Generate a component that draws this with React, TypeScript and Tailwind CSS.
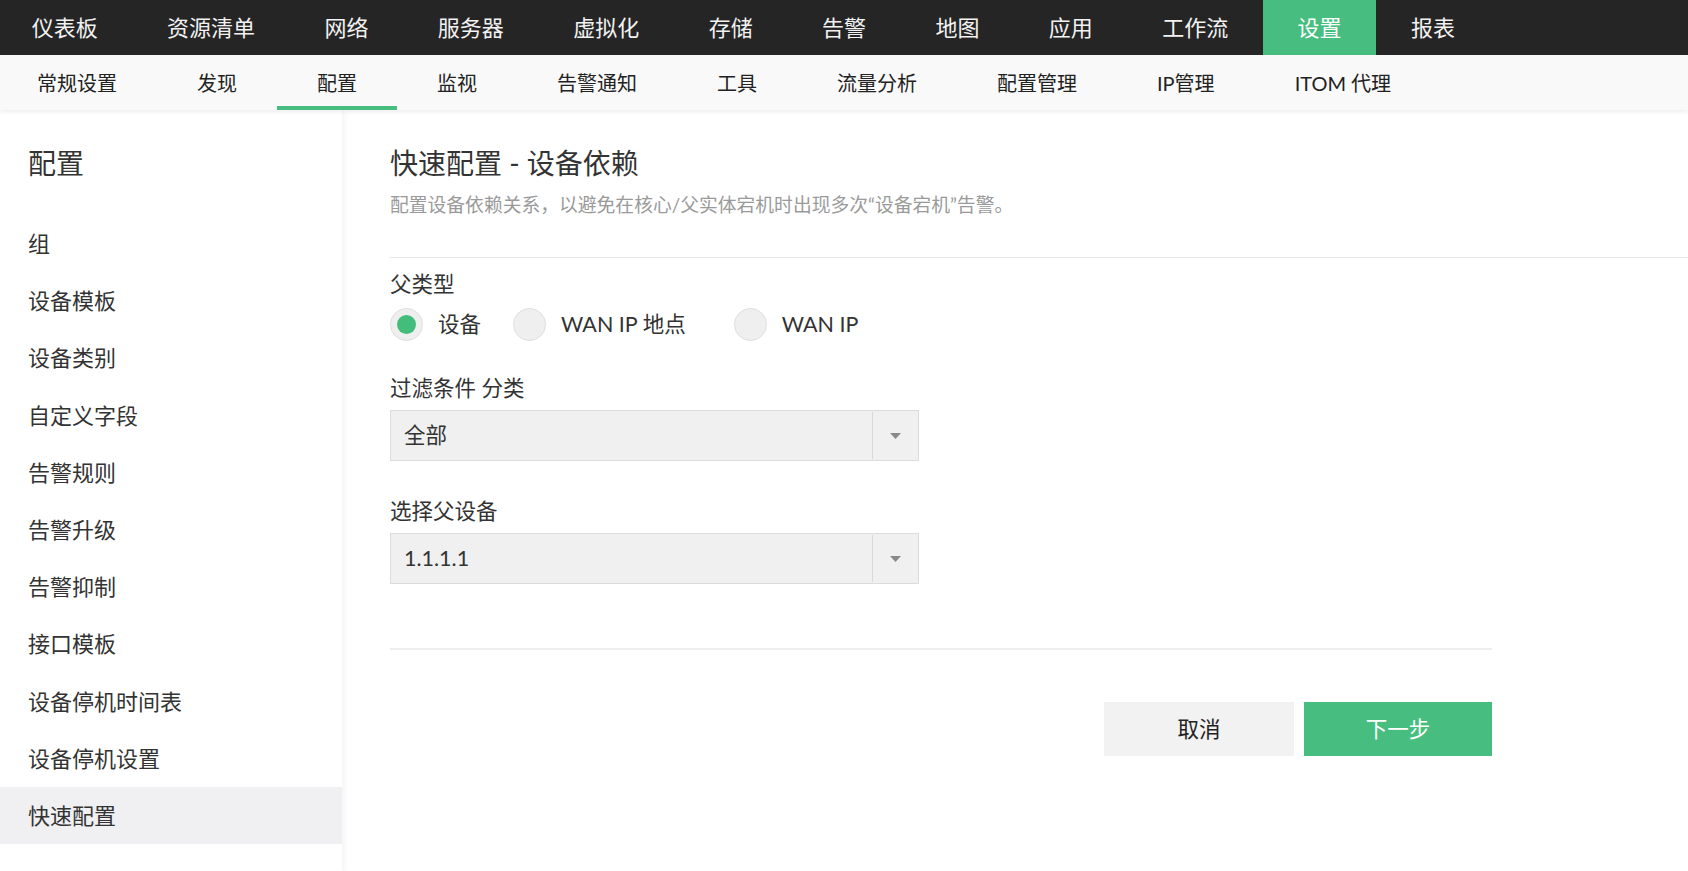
import React from "react";

const topItems = ["仪表板", "资源清单", "网络", "服务器", "虚拟化", "存储", "告警", "地图", "应用", "工作流", "设置", "报表"];
const subItems = ["常规设置", "发现", "配置", "监视", "告警通知", "工具", "流量分析", "配置管理", "IP管理", "ITOM 代理"];
const sideItems = ["组", "设备模板", "设备类别", "自定义字段", "告警规则", "告警升级", "告警抑制", "接口模板", "设备停机时间表", "设备停机设置", "快速配置"];

function Caret() {
  return (
    <svg width="11" height="6" viewBox="0 0 11 6">
      <path d="M0 0 L11 0 L5.5 6 Z" fill="#8a8a8a" />
    </svg>
  );
}

function Select({ value }: { value: string }) {
  return (
    <div className="flex h-[51px] w-[529px] items-stretch border border-[#dcdcdc] bg-[#f0f0f0]">
      <div className="flex flex-1 items-center pl-[13px] text-[21.5px] text-[#333]">{value}</div>
      <div className="my-[1px] w-px bg-[#d9d9d9]" />
      <div className="flex w-[45px] items-center justify-center">
        <Caret />
      </div>
    </div>
  );
}

function Radio({ checked, label }: { checked?: boolean; label: string }) {
  return (
    <div className="flex items-center">
      <div className="flex h-[33px] w-[33px] items-center justify-center rounded-full border border-[#dedede] bg-[#efefef]">
        {checked && <div className="h-[19px] w-[19px] rounded-full bg-[#43bd7c]" />}
      </div>
      <span className="ml-[15px] text-[21.5px] text-[#333]">{label}</span>
    </div>
  );
}

export default function App() {
  return (
    <div
      className="flex min-h-screen flex-col bg-white"
      style={{ fontFamily: 'Lato, "Noto Sans CJK SC", "Noto Sans", sans-serif' }}
    >
      {/* Top bar */}
      <div className="flex h-[55px] bg-[#252525]">
        <div className="-ml-[3px] flex">
          {topItems.map((t) => (
            <div
              key={t}
              className={`flex h-[55px] items-center px-[34.7px] text-[22px] ${
                t === "设置" ? "bg-[#47be7f] text-white" : "text-[#f2f2f2]"
              }`}
            >
              {t}
            </div>
          ))}
        </div>
      </div>

      {/* Sub nav */}
      <div className="relative z-20 flex h-[55px] bg-[#f9f9f9] shadow-[0_2px_4px_rgba(0,0,0,0.07)]">
        <div className="-ml-[3px] flex">
          {subItems.map((t) => (
            <div
              key={t}
              className={`flex h-[55px] items-center px-[40px] text-[20px] text-[#222] ${
                t === "配置" ? "border-b-[4px] border-[#47be7f] pt-[4px]" : ""
              }`}
            >
              {t}
            </div>
          ))}
        </div>
      </div>

      {/* Body */}
      <div className="flex flex-1">
        {/* Sidebar */}
        <div className="relative z-10 w-[342px] shrink-0 bg-white pt-[37px] shadow-[2px_0_6px_rgba(0,0,0,0.05)]">
          <div className="pl-[28px] text-[28px] leading-[32px] text-[#333]">配置</div>
          <div className="mt-[36px]">
            {sideItems.map((t) => (
              <div
                key={t}
                className={`flex h-[57.2px] items-center pl-[28px] text-[22px] text-[#333] ${
                  t === "快速配置" ? "bg-[#f0f0f2] text-[#222]" : ""
                }`}
              >
                {t}
              </div>
            ))}
          </div>
        </div>

        {/* Content */}
        <div className="flex-1 pl-[48px] pt-[37px]">
          <div className="text-[28px] leading-[32px] text-[#333]">快速配置 - 设备依赖</div>
          <div className="mt-[14px] text-[18.8px] leading-[24px] text-[#9a9a9a]">
            配置设备依赖关系，以避免在核心/父实体宕机时出现多次“设备宕机”告警。
          </div>
          <div className="mt-[40px] h-px bg-[#e8e8e8]" />

          <div className="w-[1102px]">
            <div className="mt-[12px] text-[21.5px] leading-[28px] text-[#333]">父类型</div>
            <div className="mt-[10px] flex items-center gap-[32px]">
              <Radio checked label="设备" />
              <Radio label="WAN IP 地点" />
              <div className="ml-[16px]">
                <Radio label="WAN IP" />
              </div>
            </div>

            <div className="mt-[33px] text-[21.5px] leading-[28px] text-[#333]">过滤条件 分类</div>
            <div className="mt-[8px]">
              <Select value="全部" />
            </div>

            <div className="mt-[36px] text-[21.5px] leading-[28px] text-[#333]">选择父设备</div>
            <div className="mt-[8px]">
              <Select value="1.1.1.1" />
            </div>

            <div className="mt-[64px] h-[2px] bg-[#eeeeee]" />

            <div className="mt-[52px] flex justify-end gap-[10px]">
              <button className="flex h-[54px] w-[190px] items-center justify-center bg-[#f2f2f2] text-[21.5px] text-[#222]">
                取消
              </button>
              <button className="flex h-[54px] w-[188px] items-center justify-center bg-[#47be7f] text-[21.5px] text-white">
                下一步
              </button>
            </div>
          </div>
        </div>
      </div>
    </div>
  );
}
